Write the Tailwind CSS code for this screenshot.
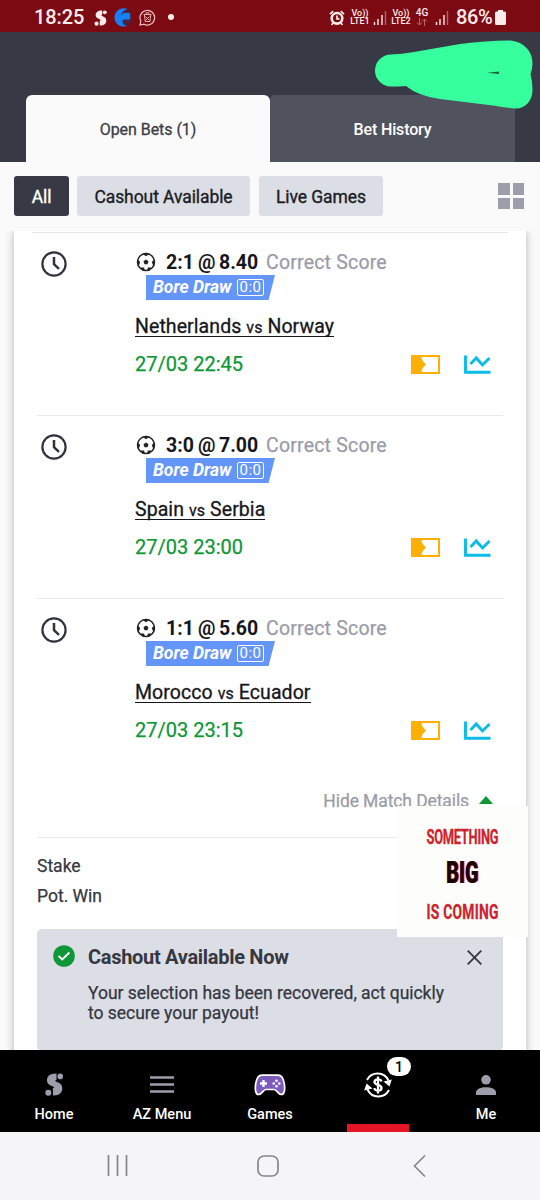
<!DOCTYPE html>
<html lang="en">
<head>
<meta charset="utf-8">
<title>Open Bets</title>
<script src="https://cdn.jsdelivr.net/npm/@tailwindcss/browser@4"></script>
</head>
<body class="w-[540px] h-[1200px] overflow-hidden bg-[#fafafa] font-['Roboto',sans-serif] flex flex-col">
<svg class="hidden">
  <symbol id="s-logo" viewBox="0 0 18 23">
    <path d="M11.500.6C5.500.4 2 3.200 2 7.200c0 3.600 2.600 5 5.600 6 2.200.8 2 1.900.2 2.100l.2 7.100c5.700.3 9.300-2.500 9.300-6.900 0-3.500-2-5.300-5.300-6.400C9.800 8.300 9.800 7.200 11.500 7z" fill="currentColor"/>
    <circle cx="15.200" cy="3.400" r="2.800" fill="currentColor"/><circle cx="3.300" cy="19.700" r="3" fill="currentColor"/>
  </symbol>
  <symbol id="clock" viewBox="0 0 26 26"><g fill="none" stroke="#30323d" stroke-width="2.200"><circle cx="13" cy="13" r="11.600"/><path d="M13 6v7.200l5 4.600" stroke-width="2.500"/></g></symbol>
  <symbol id="ball" viewBox="0 0 20 20">
    <circle cx="10" cy="10" r="8.500" fill="none" stroke="#222" stroke-width="1.500"/>
    <path d="M10 7.500l2.500 1.800-1 2.900H8.500l-1-2.900zM6.300 1.800L10 4.200l3.700-2.400L10 .8zM1.200 7l3 3-1.300 3.500L1 12zM18.800 7l-3 3 1.300 3.500L19 12zM4.600 15.400l3.500.2.800 3.300-2.500-.3zM15.400 15.400l-3.500.2-.8 3.300 2.500-.3z" fill="#222"/>
  </symbol>
  <symbol id="ticket" viewBox="0 0 29 19"><path d="M1 1h27v17H1z" fill="none" stroke="#ffb000" stroke-width="2"/><path d="M1 1h9.500c0 3.600 1.500 6 4.500 8.500-3 2.500-4.500 4.900-4.500 8.500H1z" fill="#ffb000"/></symbol>
  <symbol id="chart" viewBox="0 0 27 19"><path d="M1.500.5v16.700H26.500M6.500 9l5.700-6 6.300 7 7-7" fill="none" stroke="#0bbbe8" stroke-width="2.900"/></symbol>
</svg>

<!-- Status bar -->
<div class="h-8 shrink-0 bg-[#7b0a13] flex items-center text-[#fdeaea]">
  <div class="ml-[34px] w-[60px] text-[20px] leading-[32px] font-medium tracking-[-0.1px] pt-[2px]">18:25</div>
  <svg class="w-[13px] h-4 mt-[3px]"><use href="#s-logo"/></svg>
  <svg class="w-[19px] h-[19px] ml-[7px] mt-[3px]" viewBox="0 0 19 19"><circle cx="9.500" cy="9.500" r="8.800" fill="#4a2340"/><path d="M13.500 1A9.200 9.200 0 1 0 13 18C9 17 8 14.500 8.500 12.500L10 11.500h5.500Q16 11.500 16 11V5.500Q16 5 15.500 5H9.500L7 7.500C7.500 4.500 10 2 13.500 1z" fill="#1780f5"/></svg>
  <svg class="w-[17px] h-[17px] ml-[6px] mt-[3px]" viewBox="0 0 17 17" fill="none" stroke="#efbcbc"><path d="M1 16l.8-4A7.300 7.300 0 1 1 5 15.200z" stroke-width="1.200"/><path d="M4.500 5.500h8M5.500 6l.7 6.500h4.800l.7-6.500M7 5V3.800h3V5M6.500 7.500l4 4M10.500 7.500l-4 4" stroke-width=".9"/></svg>
  <div class="w-[6px] h-[6px] rounded-full bg-[#fdeaea] ml-[12px] mt-[2px]"></div>
  <svg class="w-4 h-4 ml-[155px] mt-[3px]" viewBox="0 0 16 16"><circle cx="8" cy="8.300" r="5.300" fill="none" stroke="currentColor" stroke-width="2.600"/><path d="M8 5.500v3.300h2.500M1 4.200L4.200 1.200M15 4.200L11.800 1.200M4 13l-1.500 2M12 13l1.500 2" fill="none" stroke="currentColor" stroke-width="1.700"/></svg>
  <div class="w-[20px] ml-[5px] mt-[2px] text-[9px] leading-[8.500px] font-medium flex flex-col items-center whitespace-nowrap"><span>Vo))</span><span>LTE1</span></div>
  <svg class="w-[14px] h-[15px] ml-[3px] mt-[3px]" viewBox="0 0 14 15" stroke="currentColor" stroke-width="1.400"><path d="M1.500 12v3M5 9v6M9 5v10"/><path d="M12.500 1v14" opacity=".4"/></svg>
  <div class="w-[20px] ml-[4px] mt-[2px] text-[9px] leading-[8.500px] font-medium flex flex-col items-center whitespace-nowrap"><span>Vo))</span><span>LTE2</span></div>
  <div class="w-[14px] ml-[4px] mt-[1px] flex flex-col items-center text-[10px] leading-[10px] font-medium">4G
    <svg class="w-3 h-[8px]" viewBox="0 0 12 8" fill="none" stroke="#b5686c"><path d="M3.500 0v7M1 4.500L3.500 7 6 4.500M8.500 8V1M6 3.500L8.500 1 11 3.500"/></svg>
  </div>
  <svg class="w-[14px] h-[15px] ml-[6px] mt-[3px]" viewBox="0 0 14 15" stroke="currentColor" stroke-width="1.400"><path d="M1.500 12v3M5 9v6M9 5v10"/><path d="M12.500 1v14" opacity=".4"/></svg>
  <div class="ml-[7px] w-[38px] text-[20px] leading-[32px] font-medium tracking-[-0.4px] pt-[2px]">86%</div>
  <svg class="w-[11px] h-[15px] ml-[1px] mt-[3px]" viewBox="0 0 11 15"><path d="M3 0h5v1.500h1.500Q11 1.500 11 3v10.500Q11 15 9.500 15h-8Q0 15 0 13.500V3Q0 1.500 1.500 1.500H3z" fill="currentColor"/></svg>
</div>

<!-- Header tabs -->
<div class="h-[130px] shrink-0 bg-[#373a45] relative flex items-end pl-[26px]">
  <div class="w-[244px] h-[67px] bg-[#fafafa] rounded-t-[6px] flex items-center justify-center text-[16px] [-webkit-text-stroke:0.3px] text-[#3c3e47] pt-[2px] tracking-[-0.05px]"><span>Open Bets (1)</span></div>
  <div class="w-[245px] h-[67px] bg-[#50535e] rounded-t-[5px] flex items-center justify-center text-[16px] font-medium text-white tracking-[-0.15px] pt-[2px]"><span>Bet History</span></div>
  <svg class="absolute left-[370px] top-[5px] w-[170px] h-[75px]" viewBox="370 37 170 75"><path d="M391 54.500Q402 54 414 52L460 44Q487 40.500 508 40.500C522 40.500 532.500 50 532.500 63Q532.500 69 530.500 74Q532.500 82 532.500 90C532.500 101 525 108.500 516 108.500Q507 108 493 105.500L440 99Q418 96 406 86Q398 86.500 391 86.500A16 16 0 0 1 391 54.500Z" fill="#36ff9d"/><path d="M487 72.700l12-1.200v2.500z" fill="#17623f"/></svg>
</div>

<!-- Filters -->
<div class="h-[69px] shrink-0 flex items-center pl-[14px] text-[17.500px] tracking-[-0.08px] [-webkit-text-stroke:0.35px] text-[#1a1c24]">
  <div class="w-[55px] h-[40px] mt-[-1px] rounded-[3px] bg-[#373a45] text-white flex items-center justify-center pt-[2px]">All</div>
  <div class="w-[173px] h-[40px] mt-[-1px] ml-[8px] rounded-[3px] bg-[#dcdee5] flex items-center justify-center pt-[2px]">Cashout Available</div>
  <div class="w-[124px] h-[40px] mt-[-1px] ml-[9px] rounded-[3px] bg-[#dcdee5] flex items-center justify-center pt-[2px]">Live Games</div>
  <div class="ml-[115px] mt-[-1px] grid grid-cols-2 gap-[3px] *:w-[11.500px] *:h-[11.500px] *:bg-[#9c9eab]"><i></i><i></i><i></i><i></i></div>
</div>

<!-- Bet slip -->
<div class="h-[819px] shrink-0 relative overflow-hidden px-[14px]">
  <div class="h-[900px] bg-white shadow-[0_0_9px_rgba(0,0,0,0.28)] pt-px">
    <div class="h-px bg-[#e6e6e8] ml-[18px] mr-[18px]"></div>
    <div id="rows" class="pl-[23px] pr-[23px]"></div>
    <div class="h-[56px] mx-[23px] border-b border-[#e9e9eb] flex justify-end pr-[10px] pt-[7px] text-[17.500px] leading-[24px] text-[#9a9ca8] tracking-[-0.1px] [-webkit-text-stroke:0.25px]"><span>Hide Match Details</span>
      <svg class="w-[14px] h-[8px] ml-[10px] mt-[7px]" viewBox="0 0 14 8"><path d="M0 8l7-8 7 8z" fill="#0d9737"/></svg></div>
    <div class="mx-[23px] pt-[13px] text-[17.500px] leading-[30px] text-[#353741] [-webkit-text-stroke:0.25px]"><div>Stake</div><div>Pot. Win</div></div>
    <div class="mx-[23px] mt-[18px] h-[122px] rounded-[5px] bg-[#dcdee5] text-[#353741] flex pl-4 pt-4">
      <svg class="w-[22px] h-[22px] shrink-0" viewBox="0 0 22 22"><circle cx="11" cy="11" r="10.800" fill="#0d9737"/><path d="M5.500 10.800l3.700 3.700 7.200-7" fill="none" stroke="#fff" stroke-width="1.900"/></svg>
      <div class="ml-[13px] w-[379px]">
        <div class="text-[20px] leading-[24px] font-bold tracking-[-0.3px]">Cashout Available Now</div>
        <div class="mt-[14px] text-[17.500px] leading-[20px] tracking-[-0.03px] [-webkit-text-stroke:0.25px] whitespace-nowrap">Your selection has been recovered, act quickly<br>to secure your payout!</div>
      </div>
      <svg class="w-[15px] h-[15px] mt-[5px]" viewBox="0 0 15 15"><path d="M.7.7l13.600 13.600M14.300.7L.7 14.300" stroke="#353741" stroke-width="1.800"/></svg>
    </div>
  </div>
  <!-- Floating promo -->
  <div class="absolute left-[397px] top-[575px] w-[131px] h-[131px] bg-[#fdfefc]">
    <svg class="w-full h-full" viewBox="0 0 131 131" font-family="Roboto, sans-serif" text-anchor="middle" font-weight="700">
      <text transform="translate(65.500 37.500) scale(.66 1)" font-size="19.500" fill="#cf222b" stroke="#cf222b" stroke-width=".3" textLength="109">SOMETHING</text>
      <text transform="translate(66 77) scale(.7 1)" font-size="31" font-weight="900" fill="#d3202a" textLength="46" lengthAdjust="spacingAndGlyphs">BIG</text>
      <text transform="translate(65 77) scale(.7 1)" font-size="31" font-weight="900" fill="#1c0406" textLength="46" lengthAdjust="spacingAndGlyphs">BIG</text>
      <text transform="translate(65.500 112.500) scale(.66 1)" font-size="21" fill="#cf222b" stroke="#cf222b" stroke-width=".3" textLength="109">IS COMING</text>
    </svg>
  </div>
</div>

<!-- App navigation -->
<div class="h-[82px] shrink-0 bg-black grid grid-cols-5 text-white text-[14.500px] font-medium leading-[18px] *:flex *:flex-col *:items-center *:relative">
  <div><svg class="w-[18px] h-[23px] mt-[23px] mb-[10px] text-[#9c9eab]"><use href="#s-logo"/></svg>Home</div>
  <div><svg class="w-6 h-[17px] mt-[26px] mb-[13px]" viewBox="0 0 24 17"><path d="M0 1.500h24M0 8.500h24M0 15.500h24" stroke="#9c9eab" stroke-width="2.400"/></svg>AZ Menu</div>
  <div><svg class="w-8 h-[22px] mt-[24px] mb-[10px]" viewBox="0 0 32 22"><path d="M8 1.200h16c4.500 0 5.600 4 6.300 8.500.8 5 .5 10.800-3 10.800-3.300 0-4.300-5-7.300-5h-8c-3 0-4 5-7.300 5-3.500 0-3.800-5.800-3-10.800C2.400 5.200 3.500 1.200 8 1.200z" fill="#7c5bbd" stroke="#fff" stroke-width="1.700"/><path d="M9.500 6v7M6 9.500h7" stroke="#fff" stroke-width="2.300"/><g fill="#fff"><circle cx="22.500" cy="6.700" r="1.300"/><circle cx="22.500" cy="12.300" r="1.300"/><circle cx="19.700" cy="9.500" r="1.300"/><circle cx="25.300" cy="9.500" r="1.300"/></g></svg>Games</div>
  <div><svg class="w-7 h-7 mt-[21px]" viewBox="0 0 28 28" fill="none" stroke="#fff"><path d="M3 9A12 12 0 0 1 24.500 9.500M25 19A12 12 0 0 1 3.500 18.500" stroke-width="2"/><path d="M19.500 10.500l8.300-2L25.500 15.500zM8.500 17.500L.2 19.500 2.500 12.500z" fill="#fff" stroke="none"/><path d="M17.500 10.500c-.5-1.500-1.800-2.100-3.500-2.100-2.200 0-3.500 1-3.500 2.700 0 3.700 7 2 7 5.800 0 1.800-1.400 2.700-3.500 2.700s-3.400-.9-3.700-2.500M14 5.500v17" stroke-width="2.300"/></svg>
    <div class="absolute left-[63px] top-[7px] w-6 h-[19px] rounded-full bg-white text-black text-[14px] leading-[20px] text-center">1</div>
    <div class="absolute left-[23px] bottom-0 w-[62px] h-2 bg-[#e61526]"></div></div>
  <div><svg class="w-5 h-5 mt-[25px] mb-[11px]" viewBox="0 0 20 20" fill="#9c9eab"><circle cx="10" cy="4.800" r="4.800"/><path d="M0 20v-2.500C0 14 5 12.300 10 12.300s10 1.700 10 5.200V20z"/></svg>Me</div>
</div>
<!-- System navigation -->
<div class="h-[68px] shrink-0 bg-[#f5f5f8]">
  <svg class="w-[540px] h-[68px]" viewBox="0 1132 540 68" fill="none" stroke="#85868a" stroke-width="1.700"><path d="M108.500 1155v21M117.500 1155v21M126.500 1155v21M425 1155.500l-10.500 10.500 10.500 10.500"/><rect x="258" y="1156" width="20" height="20" rx="6"/></svg>
</div>

<script>
const bets = [
  ["2:1", "8.40", "Netherlands", "Norway", "22:45"],
  ["3:0", "7.00", "Spain", "Serbia", "23:00"],
  ["1:1", "5.60", "Morocco", "Ecuador", "23:15"],
];
document.getElementById("rows").innerHTML = bets.map(([score, odds, home, away, time], i) => `
<div class="h-[183px] flex pt-[18px] ${i < 2 ? "border-b border-[#e9e9eb]" : ""}">
  <svg class="w-[26px] h-[26px] ml-[3.500px] mr-[.500px] shrink-0"><use href="#clock"/></svg>
  <div class="ml-[68px] flex-1 flex flex-col">
    <div class="flex items-center h-[22px] text-[19.500px] font-bold text-[#16171c] whitespace-nowrap pt-px">
      <svg class="w-5 h-5 ml-px mt-[-2px]"><use href="#ball"/></svg>
      <span class="ml-[10px] w-[32px]">${score}</span><span class="w-[21px]">@</span><span class="w-[47px]">${odds}</span>
      <span class="text-[19.500px] font-normal text-[#9a9ca8] tracking-[0.2px] [-webkit-text-stroke:0.25px]">Correct Score</span>
    </div>
    <div class="ml-[11px] mt-[2px] w-[129px] h-[25px] bg-[#6396f8] [clip-path:polygon(0_0,100%_0,95%_100%,0_100%)] flex items-center pl-[7px] text-white text-[17.500px] font-bold italic whitespace-nowrap">
      <span class="w-[84px]">Bore Draw</span>
      <span class="w-[27px] h-[17px] border-[1.500px] border-white rounded-[2px] text-[15px] leading-[15px] not-italic font-normal tracking-[0.5px] text-center">0:0</span>
    </div>
    <div class="mt-[12px] h-[28px] text-[19.500px] leading-[29px] tracking-[0.08px] text-[#16171c] [-webkit-text-stroke:0.3px]"><span class="border-b border-[#16171c] inline-block h-[25px]">${home} <span class="text-[16px]">vs</span> ${away}</span></div>
    <div class="flex items-center mt-[12px] h-[24px] pr-[12px]">
      <span class="flex-1 text-[20px] text-[#0d9737] [-webkit-text-stroke:0.25px]">27/03 ${time}</span>
      <svg class="w-[29px] h-[19px]"><use href="#ticket"/></svg>
      <svg class="w-[27px] h-[19px] ml-[24px]"><use href="#chart"/></svg>
    </div>
  </div>
</div>`).join("");
</script>
</body>
</html>
